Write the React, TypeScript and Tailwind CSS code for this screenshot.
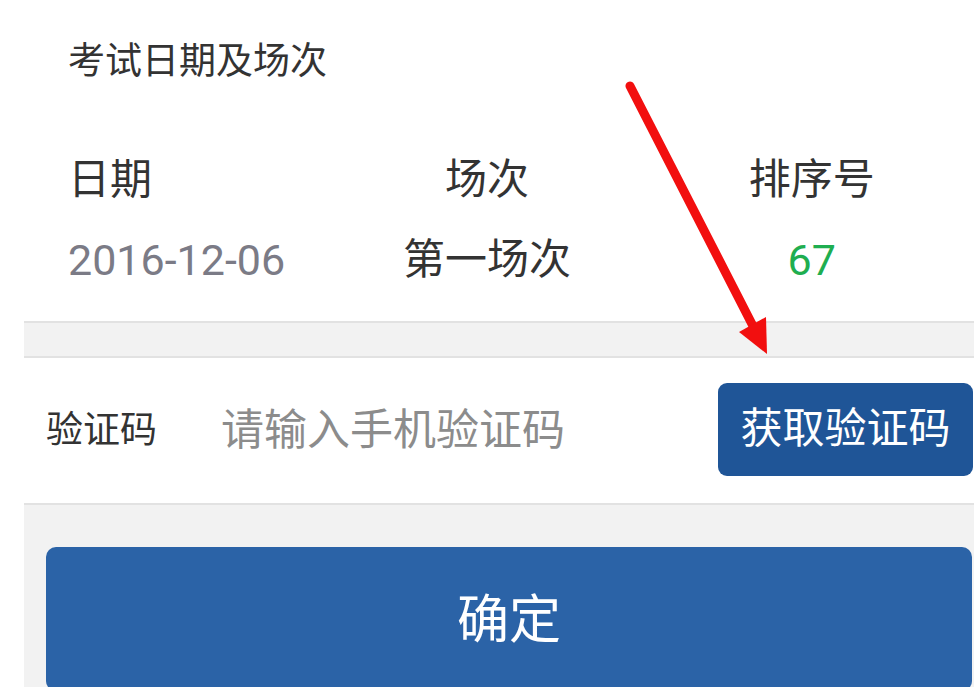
import React from 'react';

const font = "font-['Roboto','Noto_Sans_CJK_SC',sans-serif]";

const columns = [
  { label: '日期', value: '2016-12-06', valueClass: 'text-[43px] text-[#7b7b86]', align: 'items-start pl-[68px]' },
  { label: '场次', value: '第一场次', valueClass: 'text-[42px] text-[#333333]', align: 'items-center' },
  { label: '排序号', value: '67', valueClass: 'text-[43px] text-[#1fae50]', align: 'items-center' },
];

const Arrow: React.FC = () => (
  <svg
    className="absolute left-0 top-0 pointer-events-none"
    width="974"
    height="687"
    viewBox="0 0 974 687"
  >
    <line x1="630" y1="86" x2="754" y2="328" stroke="#f20f0f" strokeWidth="9" strokeLinecap="round" />
    <polygon points="767,354 739,332 766,317" fill="#f20f0f" />
  </svg>
);

export default function App() {
  return (
    <div className={`relative w-[974px] h-[687px] overflow-hidden bg-white ${font}`}>
      {/* exam date section */}
      <div className="h-[321px] bg-white">
        <div className="pt-[43px] pl-[68px] text-[37px] leading-[37px] text-[#333333]">考试日期及场次</div>
        <div className="grid grid-cols-3 mt-[79px]">
          {columns.map((col) => (
            <div key={col.label} className={`flex flex-col ${col.align}`}>
              <div className="text-[42px] leading-[42px] text-[#333333]">{col.label}</div>
              <div className={`mt-[38px] leading-[42px] ${col.valueClass}`}>{col.value}</div>
            </div>
          ))}
        </div>
      </div>

      <div className="ml-[24px]">
        <div className="h-[37px] bg-[#f2f2f2] border-y-2 border-[#e2e2e2]" />

        {/* verification code row */}
        <div className="h-[145px] flex items-center bg-white pl-[22px]">
          <span className="text-[37px] leading-[37px] text-[#333333]">验证码</span>
          <span className="ml-[64px] text-[43px] leading-[43px] text-[#8c8c8c]">请输入手机验证码</span>
          <button className="ml-auto mr-[1px] w-[255px] h-[93px] rounded-[9px] bg-[#1f5597] text-white text-[42px] leading-[42px] -mt-[3px]">
            获取验证码
          </button>
        </div>

        <div className="bg-[#f2f2f2] border-t-2 border-[#e2e2e2] pt-[42px] pl-[22px] pr-[2px] h-[200px]">
          <button className="w-full h-[144px] rounded-[10px] bg-[#2b63a7] text-white text-[52px] leading-[52px] pt-[4px]">
            确定
          </button>
        </div>
      </div>

      <Arrow />
    </div>
  );
}
